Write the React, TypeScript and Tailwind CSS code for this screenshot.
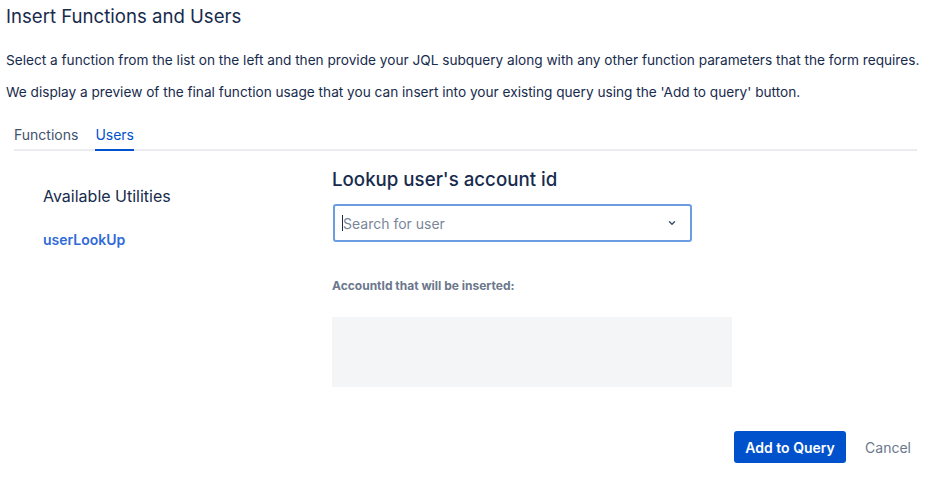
import React from "react";

export default function App() {
  return (
    <div className="w-[927px] h-[477px] bg-white text-[#172b4d] overflow-hidden" style={{ fontFamily: "Inter, 'Noto Sans', sans-serif" }}>
      <div className="pl-[6px] pt-[4px]">
        <h1 className="text-[18.6px] leading-[24px] font-normal text-[#172b4d]">Insert Functions and Users</h1>
        <p className="mt-[22px] text-[13.65px] leading-[20px] text-[#172b4d] whitespace-nowrap">
          Select a function from the list on the left and then provide your JQL subquery along with any other function parameters that the form requires.
        </p>
        <p className="mt-[12px] text-[13.65px] leading-[20px] text-[#172b4d] whitespace-nowrap">
          We display a preview of the final function usage that you can insert into your existing query using the 'Add to query' button.
        </p>
      </div>
      <div className="ml-[14px] mr-[10px] mt-[22px] pt-[1px] flex gap-[17px] border-b-2 border-[#ebecf0] text-[14px] leading-[20px]">
        <div className="pb-[4px] text-[#42526e]">Functions</div>
        <div className="pb-[4px] text-[#0052cc] -mb-[2px] border-b-2 border-[#0052cc]">Users</div>
      </div>
      <div className="flex">
        <div className="w-[332px] pl-[43px] pt-[34px]">
          <div className="text-[16px] leading-[22px] text-[#172b4d]">Available Utilities</div>
          <div className="mt-[22px] text-[14px] font-semibold text-[#2f6ad8]">userLookUp</div>
        </div>
        <div className="flex-1 pt-[17px]">
          <div className="text-[18.7px] leading-[24px] font-medium text-[#172b4d]">Lookup user's account id</div>
          <div className="mt-[12px] w-[359px] h-[38px] ml-[1px] border-2 border-[#6a9ee0] rounded-[3px] flex items-center pl-[7px] pr-[13px]">
            <span className="w-px h-[16px] bg-[#172b4d]" />
            <span className="text-[14px] text-[#7a869a] flex-1">Search for user</span>
            <svg width="10" height="10" viewBox="0 0 24 24" fill="none" stroke="#42526e" strokeWidth="3.5" strokeLinecap="round" strokeLinejoin="round">
              <path d="M6 9l6 6 6-6" />
            </svg>
          </div>
          <div className="mt-[35px] text-[12px] font-bold text-[#6b778c]">AccountId that will be inserted:</div>
          <div className="mt-[22px] w-[400px] h-[70px] bg-[#f4f5f7]" />
        </div>
      </div>
      <div className="flex justify-end items-center gap-[19px] pr-[16px] mt-[44px]">
        <button className="h-[32px] w-[112px] rounded-[3px] bg-[#0052cc] text-white text-[14px] font-semibold">Add to Query</button>
        <button className="text-[14px] text-[#6b778c]">Cancel</button>
      </div>
    </div>
  );
}
